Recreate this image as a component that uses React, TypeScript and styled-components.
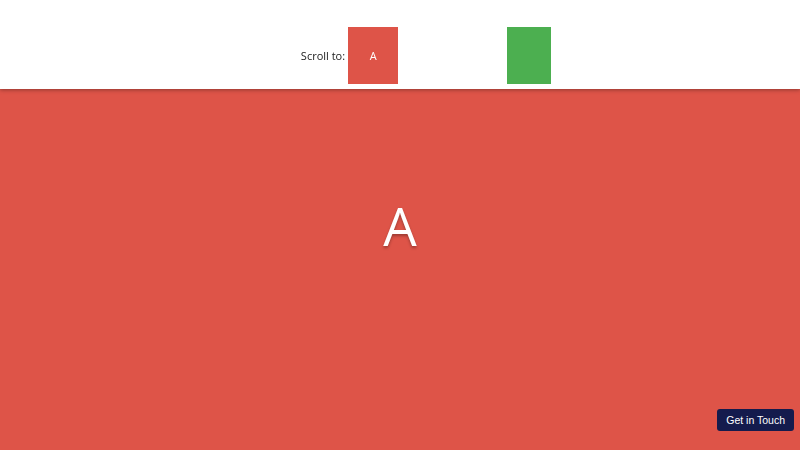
import styled, { createGlobalStyle } from 'styled-components';

const GlobalStyle = createGlobalStyle`
html, body {
  margin: 0;
  padding: 0;
  font-family: "Open Sans", "Liberation Sans", sans-serif;
  overflow: hidden;
}
`

const Header = styled.header`
position: fixed;
top: 0;
left: 0;
right: 0;
height: 89px;
box-sizing: border-box;
padding: 27px 0 5px 52px;
background-color: #ffffff;
box-shadow: 0 1px 4px rgba(0, 0, 0, 0.35);
display: flex;
flex-direction: row;
justify-content: center;
align-items: stretch;
z-index: 2;
`

const Label = styled.span`
align-self: center;
font-size: 11px;
color: #222222;
margin-right: 3px;
`

const ScrollButton = styled.button<{ $color: string; $width: number }>`
width: ${({ $width }) => $width}px;
border: none;
margin: 0;
padding: 0;
background-color: ${({ $color }) => $color};
color: #ffffff;
font-family: "Open Sans", "Liberation Sans", sans-serif;
font-size: 11px;
cursor: pointer;
`

const Section = styled.section<{ $color: string }>`
height: 100vh;
background-color: ${({ $color }) => $color};
display: flex;
align-items: center;
justify-content: center;
`

const Title = styled.h1`
margin: 0;
font-size: 53px;
font-weight: 400;
color: #ffffff;
text-shadow: 0 2px 3px rgba(0, 0, 0, 0.3);
`

const ContactButton = styled.button`
position: fixed;
right: 6px;
bottom: 19px;
height: 22px;
padding: 0 9px;
border: none;
border-radius: 3px;
background-color: #141b4d;
color: #ffffff;
font-family: "Liberation Sans", Arial, sans-serif;
font-size: 10.5px;
cursor: pointer;
`

export default function App() {
  return (
    <>
      <GlobalStyle />
      <Header>
        <Label>Scroll to:</Label>
        <ScrollButton $color="#de5448" $width={50}>A</ScrollButton>
        <ScrollButton $color="#ffffff" $width={109}></ScrollButton>
        <ScrollButton $color="#4caf50" $width={44}></ScrollButton>
      </Header>
      <Section $color="#de5448">
        <Title>A</Title>
      </Section>
      <ContactButton>Get in Touch</ContactButton>
    </>
  );
}
